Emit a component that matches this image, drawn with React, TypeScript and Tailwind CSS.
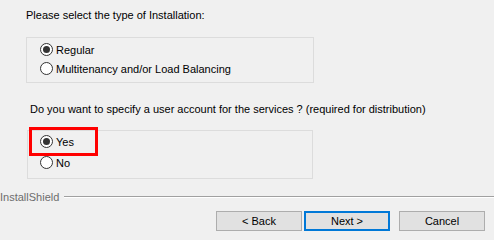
import React from "react";

function Radio({ checked, label }: { checked: boolean; label: string }) {
  return (
    <div className="flex items-center h-[19px]">
      <span className="w-[13px] h-[13px] rounded-full border border-[#333333] bg-white flex items-center justify-center">
        {checked && <span className="w-[7px] h-[7px] rounded-full bg-[#333333]" />}
      </span>
      <span className="ml-[3px]">{label}</span>
    </div>
  );
}

export default function App() {
  return (
    <div
      className="relative w-[494px] h-[240px] bg-[#f0f0f0] text-black text-[11px] leading-[14px] overflow-hidden"
      style={{ fontFamily: "'Liberation Sans', Arial, sans-serif" }}
    >
      <div className="pl-[26px] pt-[8px]">Please select the type of Installation:</div>
      <div className="ml-[26px] mt-[15px] w-[288px] h-[46px] border border-[#dcdcdc] pl-[13px] pt-[2px]">
        <Radio checked label="Regular" />
        <Radio checked={false} label="Multitenancy and/or Load Balancing" />
      </div>
      <div className="pl-[30px] mt-[19px]">
        Do you want to specify a user account for the services ? (required for distribution)
      </div>
      <div className="ml-[27px] mt-[14px] w-[286px] h-[49px] border border-[#dcdcdc] pl-[12px] flex flex-col">
        <div className="h-[21px] flex items-center">
          <Radio checked label="Yes" />
        </div>
        <div className="h-[21px] flex items-center">
          <Radio checked={false} label="No" />
        </div>
      </div>
      <div className="absolute left-[29px] top-[127px] w-[69px] h-[29px] border-[3px] border-[#ff0000]" />
      <div className="flex items-center mt-[11px]">
        <span className="text-[#6d6d6d]">InstallShield</span>
        <div className="ml-[5px] w-[431px] flex flex-col">
          <div className="h-px bg-[#a0a0a0]" />
          <div className="h-px bg-white" />
        </div>
      </div>
      <div className="flex mt-[7px] pl-[216px]">
        <button className="w-[86px] h-[20px] border border-[#adadad] bg-[#e1e1e1] text-[11px] leading-[18px]">
          &lt; Back
        </button>
        <button className="ml-[2px] w-[86px] h-[20px] border-2 border-[#0078d7] bg-[#e1e1e1] text-[11px] leading-[16px]">
          Next &gt;
        </button>
        <button className="ml-[9px] w-[86px] h-[20px] border border-[#adadad] bg-[#e1e1e1] text-[11px] leading-[18px]">
          Cancel
        </button>
      </div>
    </div>
  );
}
